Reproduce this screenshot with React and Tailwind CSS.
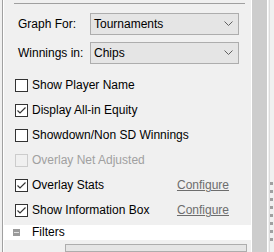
function Chevron() {
  return (
    <svg width="9" height="5" viewBox="0 0 9 5" className="ml-auto mr-[5px]">
      <path d="M0.5 0.5 L4.5 4.5 L8.5 0.5" fill="none" stroke="#606060" strokeWidth="1" />
    </svg>
  );
}

function Select({ label, value }) {
  return (
    <div className="flex items-center h-[22px]">
      <span className="w-[86px] shrink-0 pl-[14px] whitespace-nowrap text-black">{label}</span>
      <div className="flex items-center w-[149px] h-[22px] bg-[#e5e5e5] border border-[#adadad] pl-[3px]">
        <span>{value}</span>
        <Chevron />
      </div>
    </div>
  );
}

function Check({ label, checked, disabled, configure }) {
  return (
    <div className="flex items-center h-[25px] pl-[11px]">
      <div
        className={`w-[13px] h-[13px] shrink-0 border flex items-center justify-center ${
          disabled ? "border-[#cccccc] bg-[#f0f0f0]" : "border-[#333333] bg-white"
        }`}
      >
        {checked && (
          <svg width="11" height="11" viewBox="0 0 11 11">
            <path d="M1.5 5.5 L4 8 L9.5 2.5" fill="none" stroke="#333333" strokeWidth="1.2" />
          </svg>
        )}
      </div>
      <span className={`ml-[4px] whitespace-nowrap ${disabled ? "text-[#a0a0a0]" : "text-black"}`}>{label}</span>
      {configure && <span className="ml-auto mr-[22px] text-[#6d6d6d] underline">Configure</span>}
    </div>
  );
}

export default function App() {
  return (
    <div className="w-[274px] h-[252px] bg-[#f0f0f0] flex overflow-hidden text-[12px] leading-none font-['Segoe_UI','Liberation_Sans',sans-serif]">
      {/* left edge */}
      <div className="w-[2px] shrink-0" />
      <div className="w-px shrink-0 bg-[#a0a0a0]" />
      <div className="w-px shrink-0 bg-white" />

      {/* main panel */}
      <div className="w-[247px] shrink-0 flex flex-col">
        <div className="mt-[3px] ml-[10px] mr-[6px] h-px bg-[#a0a0a0]" />
        <div className="mt-[9px] flex flex-col gap-[7px]">
          <Select label="Graph For:" value="Tournaments" />
          <Select label="Winnings in:" value="Chips" />
        </div>
        <div className="mt-[9px] flex flex-col">
          <Check label="Show Player Name" />
          <Check label="Display All-in Equity" checked />
          <Check label="Showdown/Non SD Winnings" />
          <Check label="Overlay Net Adjusted" disabled />
          <Check label="Overlay Stats" checked configure />
          <Check label="Show Information Box" checked configure />
        </div>
        <div className="mt-[2px] h-[20px] bg-white flex items-center">
          <div className="ml-[9px] w-[7px] h-[7px] bg-[#9a9a9a] flex items-center justify-center">
            <div className="w-[5px] h-px bg-[#e0e0e0]" />
          </div>
          <span className="ml-[12px] text-black">Filters</span>
        </div>
        <div className="mt-[4px] ml-[61px] mr-[4px] h-[10px] border border-[#adadad] bg-[#e5e5e5]" />
      </div>

      {/* scrollbar */}
      <div className="w-px shrink-0 bg-white" />
      <div className="w-[15px] shrink-0 bg-[#cdcdcd]" />
      <div className="w-px shrink-0 bg-white" />
      <div className="w-[1px] shrink-0" />
      <div className="w-px shrink-0 bg-[#dcdcdc]" />
      <div className="flex-1 relative">
        <div className="absolute left-0 top-[182px] flex flex-col gap-[5px]">
          <div className="w-[3px] h-[3px] bg-[#a0a0a0]" />
          <div className="w-[3px] h-[3px] bg-[#a0a0a0]" />
          <div className="w-[3px] h-[3px] bg-[#a0a0a0]" />
          <div className="w-[3px] h-[3px] bg-[#a0a0a0]" />
          <div className="w-[3px] h-[3px] bg-[#a0a0a0]" />
          <div className="w-[3px] h-[3px] bg-[#a0a0a0]" />
          <div className="w-[3px] h-[3px] bg-[#a0a0a0]" />
          <div className="w-[3px] h-[3px] bg-[#a0a0a0]" />
        </div>
      </div>
    </div>
  );
}
